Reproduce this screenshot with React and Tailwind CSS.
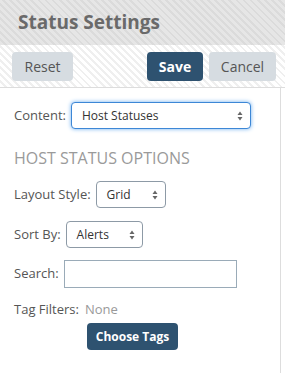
function Arrows() {
    return (
        <svg width="6" height="10" viewBox="0 0 6 10" className="shrink-0">
            <path d="M3 0.5 L5.5 4 L0.5 4 Z" fill="#666" />
            <path d="M3 9.5 L5.5 6 L0.5 6 Z" fill="#666" />
        </svg>
    );
}

function Select({ value, className = '' }) {
    return (
        <div className={`h-[27px] flex items-center justify-between pl-[10px] pr-[7px] rounded-[4px] bg-white text-[12px] text-[#333] ${className}`}>
            <span>{value}</span>
            <Arrows />
        </div>
    );
}

export default function App() {
    return (
        <div className="w-[285px] h-[373px] bg-white overflow-hidden"
            style={{ fontFamily: "'Open Sans', 'Liberation Sans', sans-serif" }}>
            <div className="h-[45px] pl-[18px] flex items-center text-[19px] font-bold text-[#6a6a6a] bg-[repeating-linear-gradient(45deg,#e6e6e6_0,#e6e6e6_3px,#dbdbdb_3px,#dbdbdb_5px)]">
                Status Settings
            </div>
            <div className="h-[43px] flex items-center pl-[12px] pr-[9px] border-b border-[#dddddd] bg-[repeating-linear-gradient(45deg,#ffffff_0,#ffffff_3px,#efefef_3px,#efefef_5px)]">
                <button className="w-[61px] h-[29px] rounded-[4px] bg-[#d6dce1] text-[14px] text-[#555]">Reset</button>
                <div className="flex-1" />
                <button className="w-[56px] h-[29px] rounded-[4px] bg-[#2e5270] text-[14px] font-bold text-white">Save</button>
                <button className="ml-[6px] w-[67px] h-[29px] rounded-[4px] bg-[#d6dce1] text-[14px] text-[#555]">Cancel</button>
            </div>
            <div className="w-[281px] h-[285px] border-r border-[#dddddd] pl-[14px] pt-[14px] text-[13px] text-[#555]">
                <div className="flex items-center">
                    <span>Content:</span>
                    <Select value="Host Statuses" className="ml-[5px] w-[180px] border border-[#3d87d6] shadow-[0_0_4px_#6fb0f0]" />
                </div>
                <div className="mt-[18px] h-[22px] flex items-center text-[16px] text-[#9a9a9a] uppercase">
                    Host Status Options
                </div>
                <div className="mt-[12px] flex items-center">
                    <span>Layout Style:</span>
                    <Select value="Grid" className="ml-[5px] w-[70px] border border-[#8d9aa6]" />
                </div>
                <div className="mt-[13px] flex items-center">
                    <span>Sort By:</span>
                    <Select value="Alerts" className="ml-[5px] w-[77px] border border-[#8d9aa6]" />
                </div>
                <div className="mt-[12px] flex items-center">
                    <span>Search:</span>
                    <div className="ml-[5px] w-[173px] h-[28px] border border-[#9aabb8] bg-white" />
                </div>
                <div className="mt-[12px] h-[20px] flex items-center">
                    <span>Tag Filters:</span>
                    <span className="ml-[6px] text-[#999]">None</span>
                </div>
                <div className="mt-[3px] pl-[73px]">
                    <button className="w-[91px] h-[27px] rounded-[4px] bg-[#2e5270] text-[12px] font-bold text-white">Choose Tags</button>
                </div>
            </div>
        </div>
    );
}
